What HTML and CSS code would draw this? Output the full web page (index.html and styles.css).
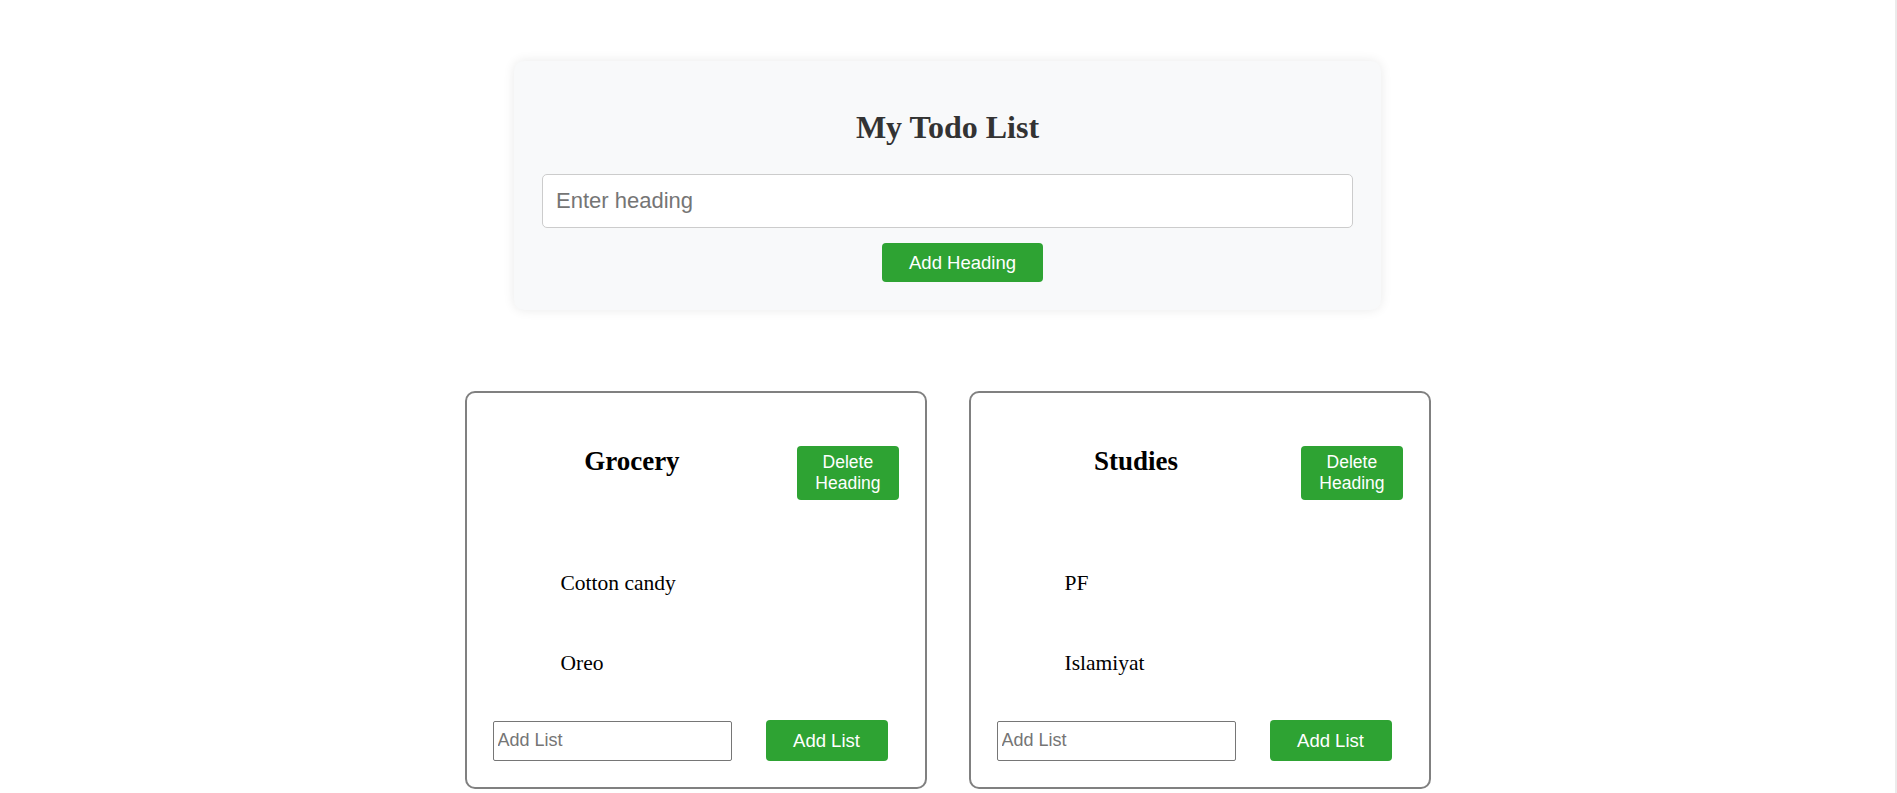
FILE: index.html
```html
<!DOCTYPE html>
<html lang="en">
<head>
<meta charset="utf-8">
<title>My Todo List</title>
<link rel="stylesheet" href="styles.css">
</head>
<body>
<div class="page">
  <section class="todo-box">
    <h1 class="todo-title">My Todo List</h1>
    <input class="heading-input" type="text" placeholder="Enter heading">
    <button class="btn btn-add-heading">Add Heading</button>
  </section>

  <div class="cards">
    <div class="card">
      <div class="card-header">
        <h2 class="card-title">Grocery</h2>
        <button class="btn btn-delete">Delete Heading</button>
      </div>
      <ul class="items">
        <li>Cotton candy</li>
        <li>Oreo</li>
      </ul>
      <div class="card-footer">
        <input class="list-input" type="text" placeholder="Add List">
        <button class="btn btn-add-list">Add List</button>
      </div>
    </div>

    <div class="card">
      <div class="card-header">
        <h2 class="card-title">Studies</h2>
        <button class="btn btn-delete">Delete Heading</button>
      </div>
      <ul class="items">
        <li>PF</li>
        <li>Islamiyat</li>
      </ul>
      <div class="card-footer">
        <input class="list-input" type="text" placeholder="Add List">
        <button class="btn btn-add-list">Add List</button>
      </div>
    </div>
  </div>
</div>
</body>
</html>
```

FILE: styles.css
```css
html, body {
  margin: 0;
  padding: 0;
  background: #ffffff;
  overflow: hidden;
}

.page {
  box-sizing: border-box;
  height: 793px;
  border-right: 2px solid #ebebeb;
  display: flex;
  flex-direction: column;
  align-items: center;
  font-family: "Liberation Serif", "Times New Roman", serif;
}

.todo-box {
  box-sizing: border-box;
  width: 867px;
  margin-top: 61px;
  padding: 48px 28px 28px;
  background: #f8f9fa;
  border-radius: 10px;
  box-shadow: 0 0 12px rgba(0, 0, 0, 0.09);
  display: flex;
  flex-direction: column;
  align-items: center;
}

.todo-title {
  margin: 0;
  font-size: 32px;
  line-height: 37px;
  font-weight: bold;
  color: #333333;
}

.heading-input {
  box-sizing: border-box;
  width: 100%;
  height: 54px;
  margin-top: 28px;
  padding: 0 13px;
  border: 1px solid #cccccc;
  border-radius: 5px;
  background: #ffffff;
  font-family: "Liberation Sans", Arial, sans-serif;
  font-size: 22px;
  color: #333;
  outline: none;
}

.heading-input::placeholder,
.list-input::placeholder {
  color: #757575;
}

.btn {
  border: none;
  background: #2ea333;
  color: #ffffff;
  font-family: "Liberation Sans", Arial, sans-serif;
  border-radius: 4px;
  cursor: pointer;
}

.btn-add-heading {
  margin-top: 15px;
  margin-left: 30px;
  height: 39px;
  padding: 0 27px;
  font-size: 18.5px;
  line-height: 21px;
}

.cards {
  display: flex;
  gap: 42px;
  margin-top: 81px;
}

.card {
  box-sizing: border-box;
  width: 462px;
  height: 398px;
  border: 2px solid #808080;
  border-radius: 10px;
  padding-top: 53px;
  display: flex;
  flex-direction: column;
}

.card-header {
  display: flex;
  align-items: flex-start;
  padding: 0 26px 0 20px;
}

.card-title {
  flex: 1;
  margin: 0;
  text-align: center;
  font-size: 27px;
  line-height: 31px;
  font-weight: bold;
  color: #000000;
}

.btn-delete {
  margin-left: 20px;
  width: min-content;
  height: 54px;
  padding: 0 18px;
  font-size: 17.5px;
  line-height: 21px;
}

.items {
  list-style: none;
  margin: 71px 0 0;
  padding: 0 0 0 94px;
  display: flex;
  flex-direction: column;
  gap: 55px;
}

.items li {
  font-size: 21.5px;
  line-height: 25px;
  color: #000000;
}

.card-footer {
  display: flex;
  align-items: center;
  gap: 34px;
  margin-top: 44px;
  padding-left: 26px;
}

.list-input {
  box-sizing: border-box;
  width: 239px;
  height: 40px;
  padding: 0 4px;
  border: 1px solid #767676;
  border-radius: 2px;
  font-family: "Liberation Sans", Arial, sans-serif;
  font-size: 18px;
  outline: none;
}

.btn-add-list {
  width: 122px;
  height: 41px;
  padding: 0;
  font-size: 18.5px;
  line-height: 21px;
}
```
